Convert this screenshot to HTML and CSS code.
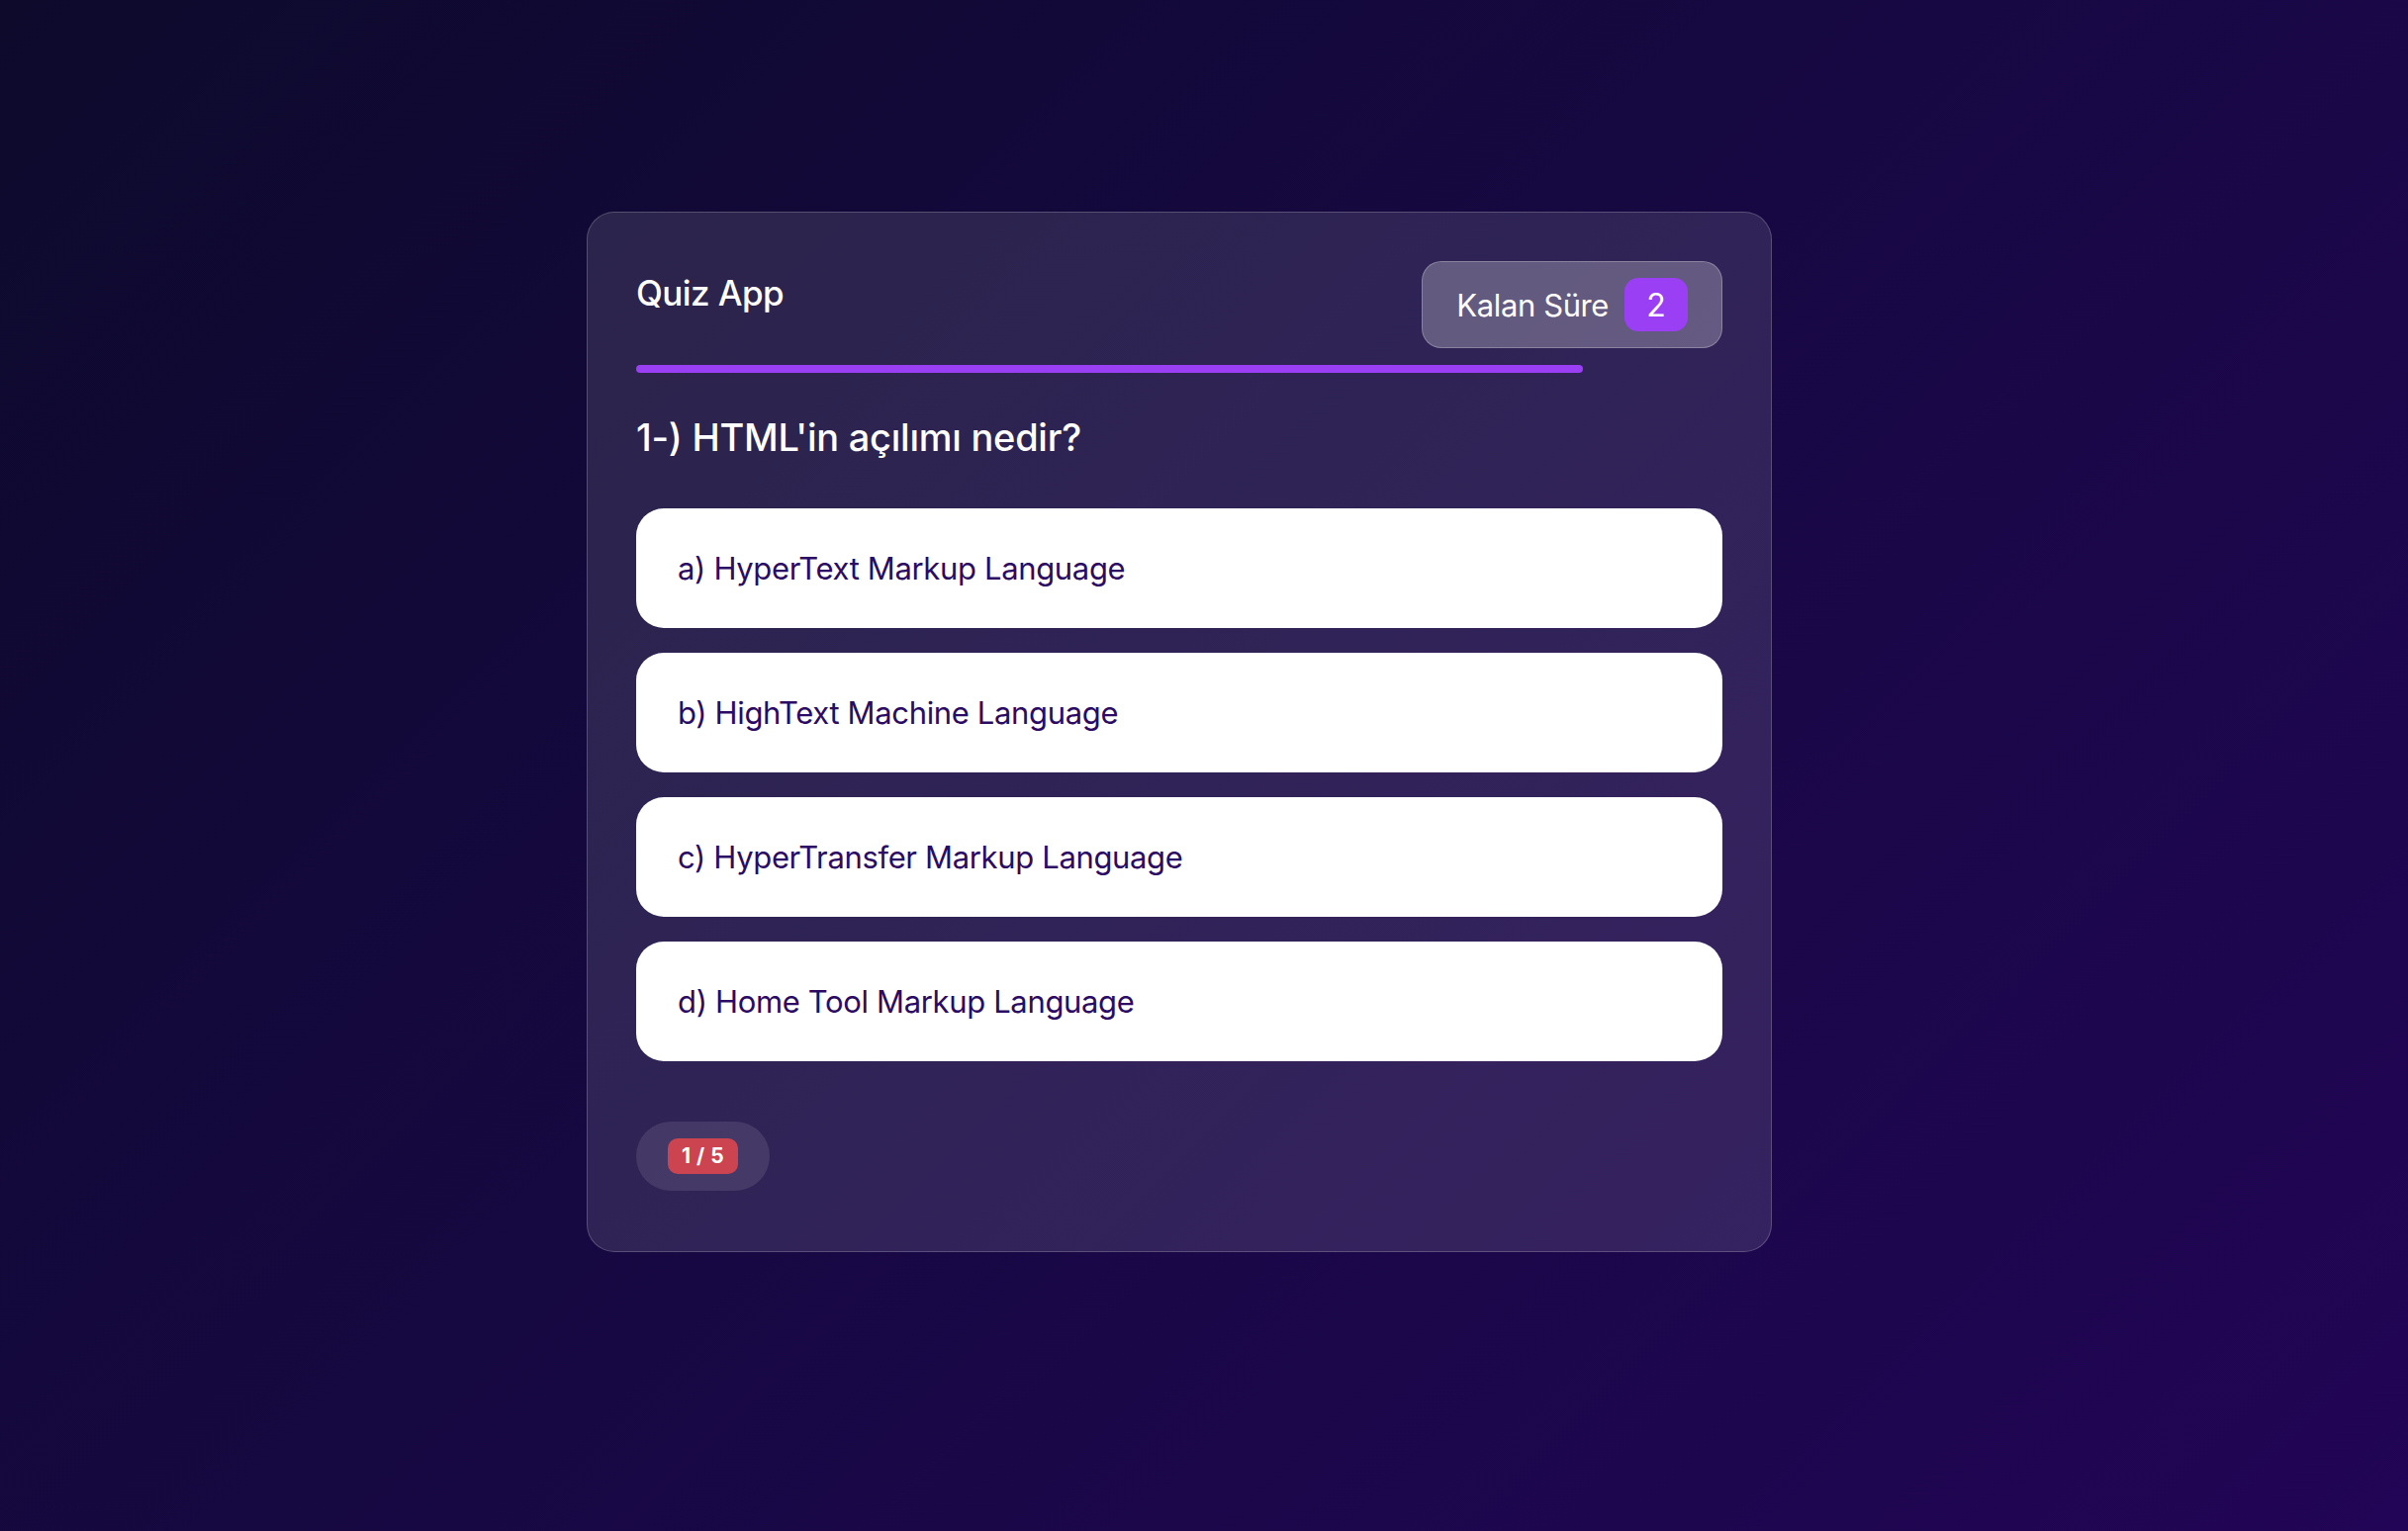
FILE: index.html
```html
<!DOCTYPE html>
<html lang="tr">
<head>
<meta charset="utf-8">
<title>Quiz App</title>
<link rel="stylesheet" href="styles.css">
</head>
<body>
<div class="page">
  <div class="card">
    <div class="header">
      <div class="title">Quiz App</div>
      <div class="timer">
        <span class="timer-text">Kalan Süre</span>
        <span class="timer-second">2</span>
      </div>
    </div>
    <div class="time-line" style="width: 957px;"></div>
    <div class="question">1-) HTML'in açılımı nedir?</div>
    <div class="options">
      <div class="option">a) HyperText Markup Language</div>
      <div class="option">b) HighText Machine Language</div>
      <div class="option">c) HyperTransfer Markup Language</div>
      <div class="option">d) Home Tool Markup Language</div>
    </div>
    <div class="footer">
      <div class="count-pill"><span class="count-badge">1 / 5</span></div>
    </div>
  </div>
</div>
</body>
</html>
```
FILE: styles.css
```css
* { box-sizing: border-box; }
html, body { margin: 0; padding: 0; }
body {
  min-height: 100vh;
  font-family: Inter, "Noto Sans", sans-serif;
  background: linear-gradient(135deg, #0d0a2c 0%, #170843 50%, #220556 100%);
  color: #fff;
}
.page {
  display: flex;
  justify-content: center;
  padding: 214px 50px 0 0;
  min-height: 1548px;
}
.card {
  width: 1198px;
  border: 1px solid rgba(255, 255, 255, 0.2);
  border-radius: 28px;
  background: rgba(255, 255, 255, 0.11);
  padding: 49px 49px 61px;
  align-self: flex-start;
}
.header {
  display: flex;
  justify-content: space-between;
  align-items: flex-start;
}
.title {
  font-size: 35px;
  font-weight: 500;
  line-height: 44px;
  letter-spacing: -0.6px;
  margin-top: 10px;
}
.timer {
  display: flex;
  align-items: center;
  gap: 16px;
  padding: 16px 34px;
  border: 1px solid rgba(255, 255, 255, 0.25);
  border-radius: 20px;
  background: rgba(255, 255, 255, 0.25);
}
.timer-text {
  font-size: 31px;
  font-weight: 400;
  letter-spacing: -0.4px;
}
.timer-second {
  width: 64px;
  height: 54px;
  border-radius: 14px;
  background: #9b3ff5;
  display: flex;
  align-items: center;
  justify-content: center;
  font-size: 32px;
}
.time-line {
  margin-top: 17px;
  height: 8px;
  border-radius: 4px;
  background: #9b3ff5;
}
.question {
  margin-top: 42px;
  font-size: 38px;
  font-weight: 500;
  line-height: 46px;
  letter-spacing: -0.25px;
}
.options {
  margin-top: 49px;
  display: flex;
  flex-direction: column;
  gap: 25px;
}
.option {
  height: 121px;
  border-radius: 28px;
  background: #fff;
  padding-left: 42px;
  display: flex;
  align-items: center;
  font-size: 31px;
  letter-spacing: -0.35px;
  color: #2b0b63;
}
.footer {
  margin-top: 61px;
  display: flex;
}
.count-pill {
  display: flex;
  padding: 17px 32px;
  border-radius: 999px;
  background: rgba(255, 255, 255, 0.1);
}
.count-badge {
  height: 36px;
  line-height: 36px;
  padding: 0 14px;
  border-radius: 10px;
  background: #cc4450;
  font-size: 21px;
  font-weight: 700;
  letter-spacing: 0.5px;
  color: #fff;
}
```
